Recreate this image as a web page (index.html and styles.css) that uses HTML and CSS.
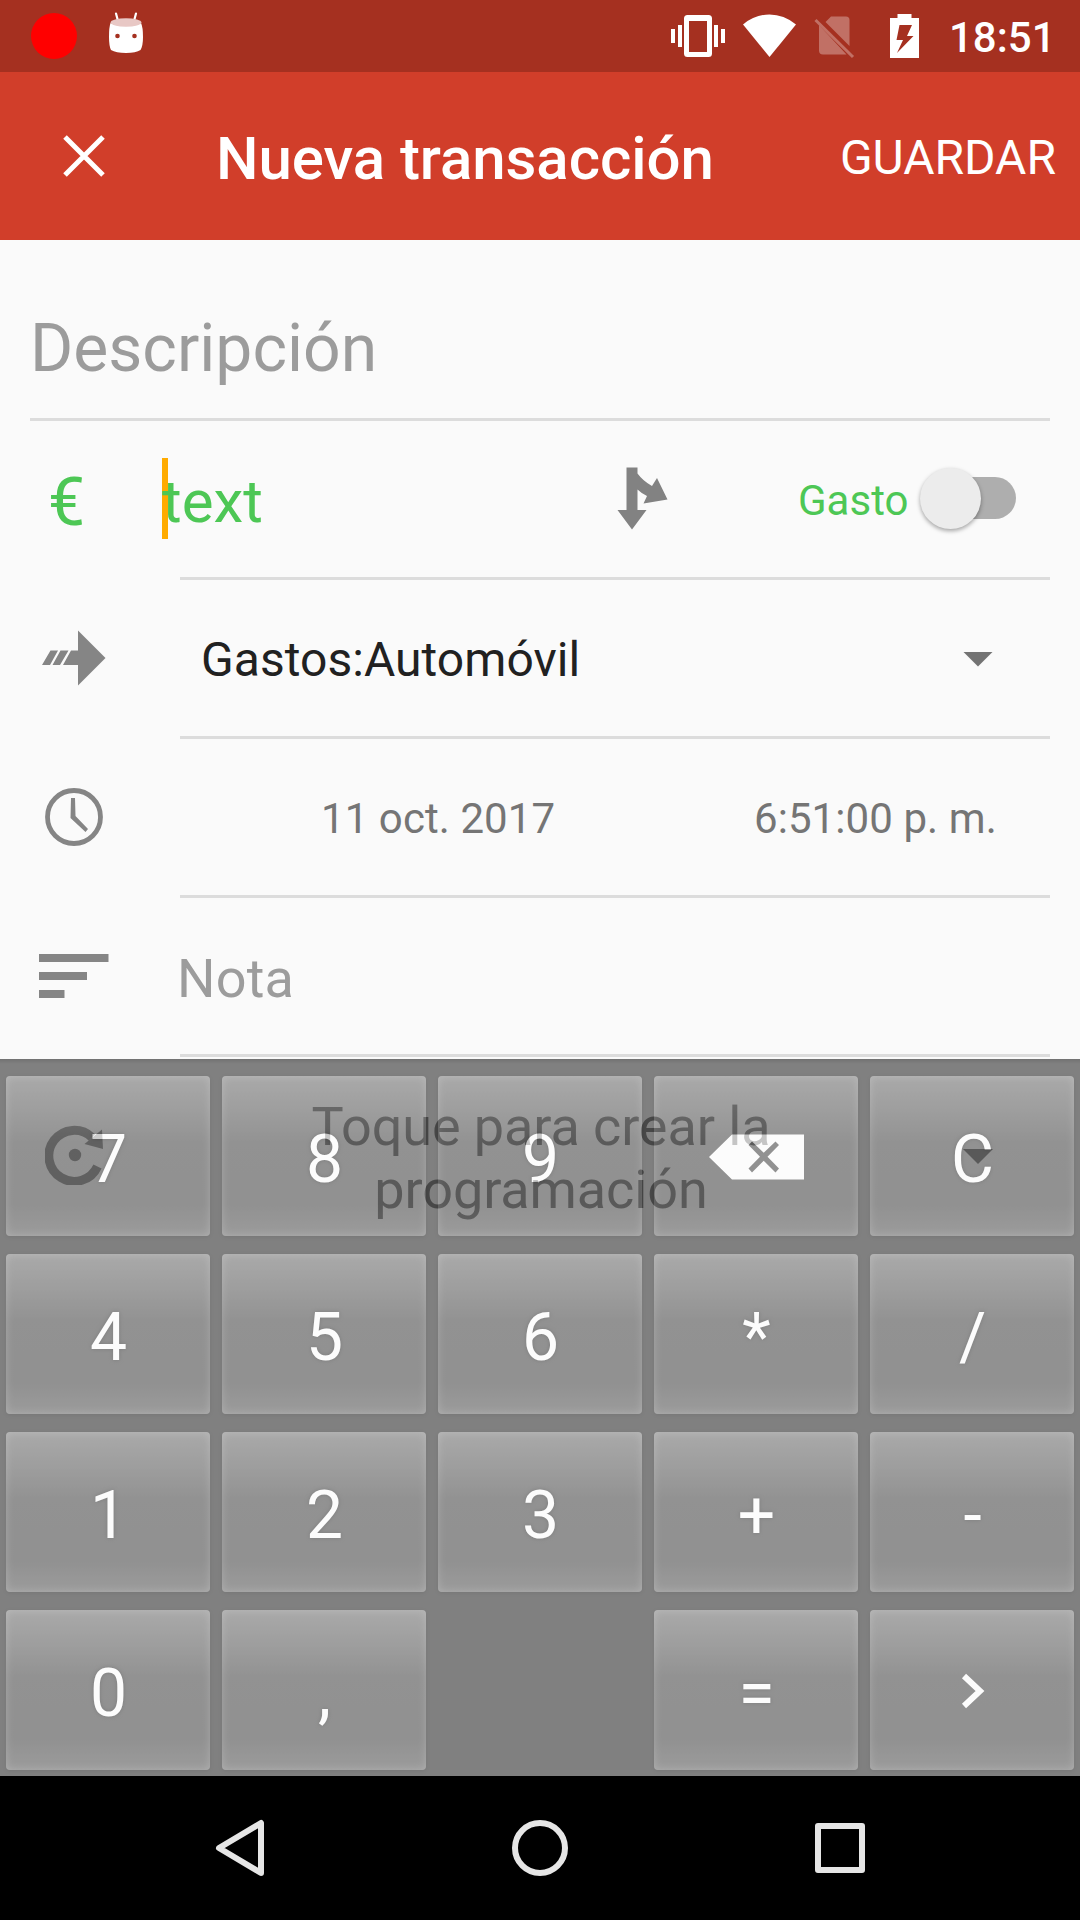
FILE: index.html
```html
<!DOCTYPE html>
<html lang="es">
<head>
<meta charset="utf-8">
<title>Nueva transacción</title>
<link rel="stylesheet" href="styles.css">
</head>
<body>
<div class="status">
  <span class="rec"></span>
  <svg class="robot" width="36" height="42" viewBox="0 0 36 42"><path d="M8 1.500 10 9M28 1.500 26 9" stroke="#fff" stroke-width="2.200" stroke-linecap="round"/><path d="M2.500 11Q1 15 1 25 1 34 3 38 8 41 18 41 28 41 32.500 38 35 34 35 25 35 15 33 11 28 14 18 14 8 14 2.500 11Z" fill="#fff"/><ellipse cx="18" cy="10.500" rx="15.500" ry="4.200" fill="#e8c8c5"/><circle cx="9.500" cy="24" r="2.300" fill="#a53020"/><circle cx="26.500" cy="24" r="2.300" fill="#a53020"/></svg>
  <svg class="sys" width="260" height="72" viewBox="666 0 260 72" fill="#fff"><path fill-rule="evenodd" d="M687.500 15h21a3.500 3.500 0 0 1 3.500 3.500v35a3.500 3.500 0 0 1-3.500 3.500h-21a3.500 3.500 0 0 1-3.500-3.500v-35a3.500 3.500 0 0 1 3.500-3.500zM689 21v31h18V21z"/><path d="M671 29h4v14h-4zM678 25h4v22h-4zM714 25h4v22h-4zM721 29h4v14h-4z"/><path d="M743 24.500Q755 14.500 769.500 14.500T796 24.500L769.500 57z"/><g opacity=".31"><path d="M825.500 22 831 16.500h15q3.500 0 3.500 3.500v26zM819 25 846.500 54.500H823q-4 0-4-4z"/><path d="M815.500 20 853 57" stroke="#fff" stroke-width="3"/></g><path fill-rule="evenodd" d="M890 18h7.500v-4h14v4h7.500v40h-29zM899.500 25 896.500 40h6.500l-6 13 16.500-17h-6.500l5-11z"/></svg>
  <span class="clock">18:51</span>
</div>
<header class="appbar">
  <svg class="close" width="42" height="42" viewBox="0 0 42 42"><path d="M2 2 40 40M40 2 2 40" stroke="#fff" stroke-width="5"/></svg>
  <h1 class="title">Nueva transacción</h1>
  <span class="save">GUARDAR</span>
</header>
<main class="content">
  <form class="form">
    <div class="desc">Descripción</div>
    <div class="row">
      <span class="euro">€</span>
      <div class="field amount">
        <span class="value">text</span>
        <svg class="split" width="52" height="64" viewBox="0 0 52 64"><path d="M9.500.500h11v6Q26 14 35 19L40 11 50.500 32.500 26.500 36.500 30 29Q24 26 20.500 22.500V43h9L15 62.500.500 43h9z" fill="#828282"/></svg>
        <span class="kind">Gasto</span>
        <span class="switch"><span class="thumb"></span><span class="track"></span></span>
      </div>
    </div>
    <div class="row">
      <svg class="ico ico-arrow" width="64" height="56" viewBox="0 0 64 56"><path d="M36 .500 63.500 28 36 55.500V35H21l8-14.500h7zM8.500 20.500h7.500L8 35H0zM18.500 20.500h8L18 35h-7.500z" fill="#858585"/></svg>
      <div class="field account"><span class="account-name">Gastos:Automóvil</span><span class="caret"></span></div>
    </div>
    <div class="row">
      <svg class="ico ico-clock" width="58" height="58" viewBox="0 0 58 58" fill="none" stroke="#858585"><circle cx="29" cy="29" r="26.500" stroke-width="4.800"/><path d="M26 10h4l.500 18L43 41l-2.500 3L25.500 30z" fill="#858585" stroke="none"/></svg>
      <div class="field when"><span class="date">11 oct. 2017</span><span class="time">6:51:00 p. m.</span></div>
    </div>
    <div class="row">
      <svg class="ico ico-note" width="70" height="44" viewBox="0 0 70 44"><path d="M0 0h69.500v8H0zM0 18h48v8H0zM0 36h25.500v8H0z" fill="#858585"/></svg>
      <div class="field note">Nota</div>
    </div>
    <div class="row repeat">
      <svg class="ico ico-repeat" width="60" height="60" viewBox="0 0 60 60"><path d="M47 12.500A25.500 25.500 0 1 0 52.500 41.500" fill="none" stroke="#858585" stroke-width="9"/><path d="M57 4.500 58 24 39.500 19z" fill="#858585"/><circle cx="30" cy="30" r="6.200" fill="#858585"/></svg>
      <div class="schedule"><span class="hint">Toque para crear la<br>programación</span><span class="caret"></span></div>
    </div>
  </form>
  <div class="keypad">
    <span class="key">7</span><span class="key">8</span><span class="key">9</span>
    <span class="key key-icon"><svg width="96" height="46" viewBox="0 0 96 46"><path fill-rule="evenodd" d="M23 .500h72v45H23L0 23zM43 7.500 39.500 11 51 22.700 39.500 34.500 43 38.500 54.700 26.700 66.500 38.500 70 34.500 58.500 22.700 70 11 66.500 7.500 54.700 18.700z" fill="#fff"/></svg></span>
    <span class="key">C</span>
    <span class="key">4</span><span class="key">5</span><span class="key">6</span><span class="key">*</span><span class="key">/</span>
    <span class="key">1</span><span class="key">2</span><span class="key">3</span><span class="key">+</span><span class="key">-</span>
    <span class="key">0</span><span class="key">,</span><span class="gap"></span><span class="key">=</span>
    <span class="key key-icon"><svg width="24" height="36" viewBox="0 0 24 36"><path d="M3 3 19 18 3 33" fill="none" stroke="#fff" stroke-width="6"/></svg></span>
  </div>
</main>
<nav class="nav">
  <svg width="60" height="60" viewBox="0 0 60 60"><path d="M51 5v50L9 30z"/></svg>
  <svg width="60" height="60" viewBox="0 0 60 60"><circle cx="30" cy="30" r="25"/></svg>
  <svg width="60" height="60" viewBox="0 0 60 60"><rect x="8" y="8" width="44" height="44"/></svg>
</nav>
</body>
</html>
```
FILE: styles.css
```css
* { box-sizing: border-box; }
body {
  margin: 0;
  width: 1080px;
  height: 1920px;
  overflow: hidden;
  display: flex;
  flex-direction: column;
  font-family: Roboto, "Liberation Sans", sans-serif;
  background: #fafafa;
}
svg { display: block; flex: none; }

.status {
  height: 72px;
  background: #a53020;
  display: flex;
  align-items: center;
  padding-left: 31px;
  color: #fff;
}
.rec { width: 46px; height: 46px; border-radius: 50%; background: #f00; }
.robot { margin: 0 0 7px 31px; }
.sys { margin-left: 522px; }
.clock { margin: 3px 0 0 23px; font-size: 42px; font-weight: 500; line-height: 50px; }

.appbar {
  height: 168px;
  background: #d13e2a;
  display: flex;
  align-items: center;
  padding: 0 24px 0 63px;
  color: #fff;
}
.title { margin: 6px 0 0 111px; font-size: 60px; font-weight: 500; line-height: 70px; letter-spacing: -.06px; white-space: nowrap; }
.save { margin-left: auto; margin-top: 4px; font-size: 48px; line-height: 56px; }

.content { position: relative; height: 1536px; overflow: hidden; }
.form { padding: 0 30px; }
.desc {
  height: 181px;
  padding-top: 70px;
  border-bottom: 3px solid #dcdcdc;
  font-size: 66px;
  line-height: 77px;
  color: #9c9c9c;
}
.row { display: grid; grid-template-columns: 150px 870px; height: 159px; align-items: center; }
.field { height: 159px; border-bottom: 3px solid #dcdcdc; display: flex; align-items: center; }
.euro { padding: 4px 0 0 18px; font-size: 66px; line-height: 78px; color: #4dc755; }
.amount { color: #4dc755; }
.value {
  margin: 0 0 2px -18px;
  width: 436px;
  height: 81px;
  padding-top: 5px;
  font-size: 60px;
  line-height: 77px;
  background: linear-gradient(#ffab00, #ffab00) left / 6px 100% no-repeat;
}
.split { margin-left: 19px; }
.kind { margin: 4px 0 0 129px; width: 115px; font-size: 42px; line-height: 50px; }
.switch { display: flex; align-items: center; margin: 0 0 2px 7px; }
.track { width: 66px; height: 42px; margin-left: -31px; border-radius: 0 21px 21px 0; background: #aeaeae; }
.thumb {
  position: relative;
  z-index: 1;
  width: 61px;
  height: 61px;
  border-radius: 50%;
  background: #ececec;
  box-shadow: 0 2px 4px rgba(0, 0, 0, .35);
}
.ico-arrow { margin: 0 0 3px 12px; }
.ico-clock { margin: 0 0 4px 15px; }
.ico-note { margin: 0 0 3px 9px; }
.account { justify-content: space-between; padding: 0 57px 0 21px; font-size: 48px; letter-spacing: .05px; color: #212121; }
.account-name { padding-top: 3px; }
.caret { width: 30px; height: 15px; margin-top: 2px; background: #737373; clip-path: polygon(0 0, 100% 0, 50% 100%); }
.when { font-size: 42px; letter-spacing: .08px; color: #757575; }
.when span { padding-top: 2px; }
.date { margin-left: 141px; width: 433px; }
.note { padding-top: 4px; font-size: 54px; color: #9c9c9c; text-indent: -3px; letter-spacing: .2px; }
.repeat { height: 197px; }
.ico-repeat { margin: 0 0 2px 15px; }
.schedule { display: flex; align-items: center; justify-content: space-between; padding-right: 57px; }
.hint { width: 722px; font-size: 54px; line-height: 63px; letter-spacing: -.1px; text-align: center; color: #757575; padding-top: 4px; }

/* Translucent calculator window laid over the form */
.keypad {
  position: absolute;
  left: 0;
  bottom: 0;
  width: 1080px;
  height: 717px;
  padding: 17px 6px 6px;
  display: grid;
  grid-template-columns: repeat(5, 204px);
  grid-auto-rows: 160px;
  gap: 18px 12px;
  opacity: .58;
  background: linear-gradient(#101010, #2a2a2a 5px);
}
.key {
  display: flex;
  justify-content: center;
  padding: 45px 0 0 1px;
  border-radius: 4px;
  font-size: 66px;
  line-height: 77px;
  color: #fff;
  text-shadow: 0 0 4px rgba(0, 0, 0, .5);
  background: linear-gradient(#707070 0%, #5c5c5c 22%, #484848 42%, #464646 80%, #585858 100%);
  box-shadow: inset 0 0 8px rgba(255, 255, 255, .22), 0 1px 5px rgba(0, 0, 0, .45);
}
.key-icon { padding: 2px 0 0 1px; align-items: center; }

.nav {
  height: 144px;
  background: #000;
  display: grid;
  grid-template-columns: repeat(3, 300px);
  justify-content: center;
  place-items: center;
}
.nav svg { fill: none; stroke: #e6e6e6; stroke-width: 6; stroke-linejoin: round; }
```
